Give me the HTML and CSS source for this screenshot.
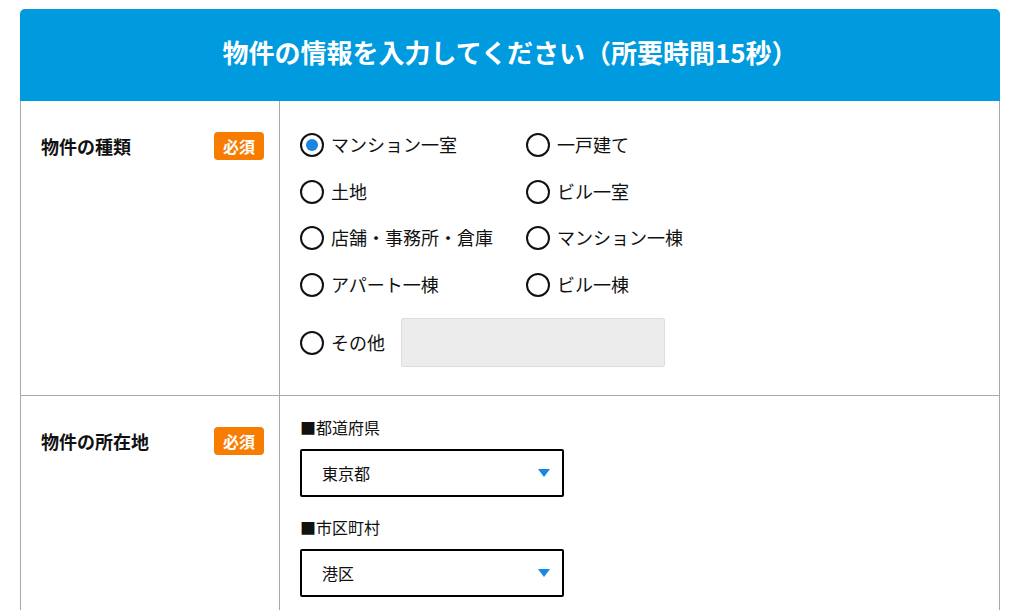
FILE: index.html
```html
<!DOCTYPE html>
<html lang="ja">
<head>
    <meta charset="UTF-8">
    <title>物件情報入力</title>
    <link rel="stylesheet" href="styles.css">
</head>
<body>
    <div class="form-box">
        <h1 class="form-title">物件の情報を入力してください（所要時間15秒）</h1>

        <div class="form-row">
            <div class="row-label">
                <span class="label-text">物件の種類</span>
                <span class="badge">必須</span>
            </div>
            <div class="row-body">
                <div class="option-grid">
                    <label class="option"><input type="radio" name="type" checked><span>マンション一室</span></label>
                    <label class="option"><input type="radio" name="type"><span>一戸建て</span></label>
                    <label class="option"><input type="radio" name="type"><span>土地</span></label>
                    <label class="option"><input type="radio" name="type"><span>ビル一室</span></label>
                    <label class="option"><input type="radio" name="type"><span>店舗・事務所・倉庫</span></label>
                    <label class="option"><input type="radio" name="type"><span>マンション一棟</span></label>
                    <label class="option"><input type="radio" name="type"><span>アパート一棟</span></label>
                    <label class="option"><input type="radio" name="type"><span>ビル一棟</span></label>
                    <div class="option option-other">
                        <label class="option"><input type="radio" name="type"><span>その他</span></label>
                        <input type="text" class="other-input">
                    </div>
                </div>
            </div>
        </div>

        <div class="form-row">
            <div class="row-label">
                <span class="label-text">物件の所在地</span>
                <span class="badge">必須</span>
            </div>
            <div class="row-body row-body-address">
                <p class="field-title">■都道府県</p>
                <div class="select-wrap">
                    <select class="select-box">
                        <option>東京都</option>
                    </select>
                </div>
                <p class="field-title">■市区町村</p>
                <div class="select-wrap">
                    <select class="select-box">
                        <option>港区</option>
                    </select>
                </div>
            </div>
        </div>
    </div>
</body>
</html>
```

FILE: styles.css
```css
body {
    font-family: "Noto Sans CJK JP", "Noto Sans", sans-serif;
    background-color: #fff;
    color: #111;
    margin: 0;
    padding: 9px 20px 0;
}

.form-box {
    width: 980px;
}

.form-title {
    margin: 0;
    background-color: #009ade;
    color: #fff;
    font-size: 26px;
    font-weight: bold;
    line-height: 34px;
    text-align: center;
    padding: 26px 0 32px;
    border-radius: 5px 5px 0 0;
}

.form-row {
    display: flex;
    border: 1px solid #a8a8a8;
    border-top: none;
}

.row-label {
    width: 259px;
    box-sizing: border-box;
    flex-shrink: 0;
    border-right: 1px solid #a8a8a8;
    padding: 31px 15px 0 20px;
    display: flex;
    justify-content: space-between;
    align-items: flex-start;
}

.label-text {
    font-size: 18px;
    font-weight: bold;
    line-height: 28px;
}

.badge {
    background-color: #f77c00;
    color: #fff;
    font-size: 16px;
    font-weight: bold;
    line-height: 28px;
    padding: 0 9px;
    border-radius: 4px;
}

.row-body {
    flex: 1;
    padding: 32px 20px 28px;
}

.row-body-address {
    padding-top: 19px;
}

/* ラジオボタン */
.option-grid {
    display: grid;
    grid-template-columns: 226px 226px;
    grid-template-rows: repeat(4, 24px) auto;
    row-gap: 22.5px;
}

.option {
    display: flex;
    align-items: center;
    gap: 7px;
    font-size: 18px;
    line-height: 24px;
    cursor: pointer;
}

.option span {
    position: relative;
    top: -1px;
}

.option input[type="radio"] {
    appearance: none;
    -webkit-appearance: none;
    margin: 0;
    width: 24px;
    height: 24px;
    border: 2px solid #111;
    border-radius: 50%;
    box-sizing: border-box;
    display: flex;
    align-items: center;
    justify-content: center;
}

.option input[type="radio"]:checked::after {
    content: "";
    width: 12px;
    height: 12px;
    border-radius: 50%;
    background-color: #1a86e4;
}

.option-other {
    grid-column: 1 / -1;
    margin-top: -1px;
    gap: 16px;
}

.other-input {
    width: 264px;
    height: 49px;
    box-sizing: border-box;
    background-color: #ececec;
    border: 1px solid #ddd;
    border-radius: 2px;
}

/* 所在地 */
.field-title {
    margin: 0 0 10px;
    font-size: 16px;
    line-height: 24px;
}

.select-wrap {
    position: relative;
    width: 264px;
    margin-bottom: 18px;
}

.select-wrap:last-child {
    margin-bottom: 0;
}

.select-wrap::after {
    content: "";
    position: absolute;
    right: 14px;
    top: 20px;
    border-left: 6px solid transparent;
    border-right: 6px solid transparent;
    border-top: 8px solid #1a86e4;
}

.select-box {
    appearance: none;
    -webkit-appearance: none;
    width: 100%;
    height: 48px;
    border: 2px solid #000;
    border-radius: 2px;
    background-color: #fff;
    padding: 0 20px;
    font-family: inherit;
    font-size: 16px;
    color: #111;
}
```
